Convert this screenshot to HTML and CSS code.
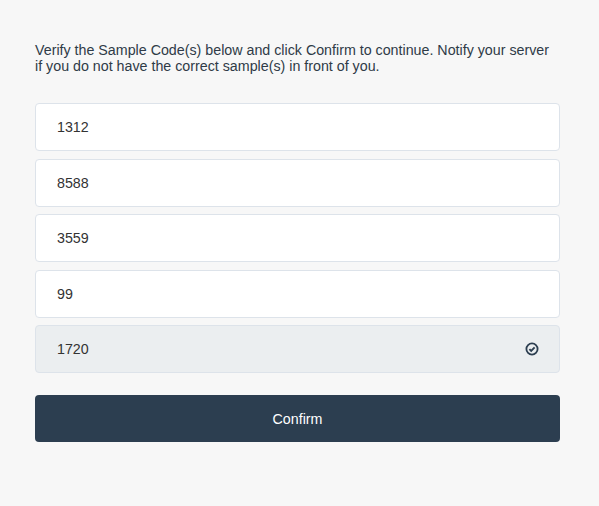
FILE: index.html
```html
<!DOCTYPE html>
<html>
<head>
<meta charset="utf-8">
<link rel="stylesheet" href="styles.css">
</head>
<body>
<div class="panel">
  <p class="intro">Verify the Sample Code(s) below and click Confirm to continue. Notify your server if you do not have the correct sample(s) in front of you.</p>
  <div class="codes">
    <div class="code">1312</div>
    <div class="code">8588</div>
    <div class="code">3559</div>
    <div class="code">99</div>
    <div class="code confirmed">1720
      <svg class="check" width="14" height="14" viewBox="0 0 14 14"><circle cx="7" cy="7" r="5.6" fill="none" stroke="#2c3e50" stroke-width="1.8"/><path d="M4.4 7.1 L6.2 8.9 L9.6 5.4" fill="none" stroke="#2c3e50" stroke-width="1.9"/></svg>
    </div>
  </div>
  <button class="confirm">Confirm</button>
</div>
</body>
</html>
```
FILE: styles.css
```css
html, body {
  margin: 0;
  background: #f7f7f7;
}
body {
  font-family: "Liberation Sans", Arial, sans-serif;
  font-size: 14.25px;
  color: #333;
}
.panel {
  width: 525px;
  padding: 42px 35px 0;
}
.intro {
  margin: 0 0 29px;
  line-height: 16px;
  color: #2f3b47;
}
.codes {
  display: flex;
  flex-direction: column;
  gap: 7.5px;
}
.code {
  height: 46px;
  box-sizing: content-box;
  border: 1px solid #dde3ea;
  border-radius: 4px;
  background: #fff;
  display: flex;
  align-items: center;
  justify-content: space-between;
  padding: 0 20px 0 21px;
  color: #333;
}
.code.confirmed {
  background: #ebeef0;
}
.check {
  display: block;
}
.confirm {
  display: block;
  width: 100%;
  height: 47px;
  margin-top: 22px;
  border: none;
  border-radius: 4px;
  background: #2c3e50;
  color: #fff;
  font-family: inherit;
  font-size: 14.25px;
}
```
